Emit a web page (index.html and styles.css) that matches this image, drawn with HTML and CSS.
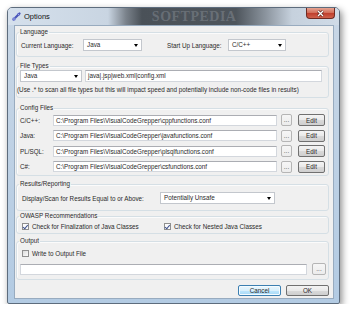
FILE: index.html
```html
<!DOCTYPE html>
<html lang="en">
    <head>
        <meta charset="utf-8">
        <title>Options</title>
        <link rel="stylesheet" href="styles.css">
    </head>
    <body>
        <div class="window">
            <div class="titlebar">
                <svg class="appicon" width="9" height="9" viewBox="0 0 9 9">
                    <path d="M1.5 7.5 L7.5 1.5" stroke="#4a56b8" stroke-width="2.2" stroke-linecap="round"/>
                    <circle cx="2" cy="7" r="1.8" fill="#7b86d6"/>
                    <path d="M5 1 L8 4" stroke="#9aa4e8" stroke-width="1"/>
                </svg>
                <span class="title">Options</span>
                <span class="watermark">SOFTPEDIA</span>
                <button type="button" class="close">
                    <svg width="9" height="7" viewBox="0 0 9 7">
                        <path d="M2 1 L7 6 M7 1 L2 6" stroke="#5a2018" stroke-width="2.6"/>
                        <path d="M2 1 L7 6 M7 1 L2 6" stroke="#fff" stroke-width="1.3"/>
                    </svg>
                </button>
            </div>

            <div class="client">
                <fieldset class="group g-lang">
                    <legend>Language</legend>
                    <div class="row">
                        <span class="lbl lbl-current">Current Language:</span>
                        <div class="combo w-cur">Java</div>
                        <span class="lbl lbl-startup">Start Up Language:</span>
                        <div class="combo w-start">C/C++</div>
                    </div>
                </fieldset>

                <fieldset class="group g-types">
                    <legend>File Types</legend>
                    <div class="row">
                        <div class="combo w-type">Java</div>
                        <div class="field w-ext">java|.jsp|web.xml|config.xml</div>
                    </div>
                    <p class="note">(Use .* to scan all file types but this will impact speed and potentially include non-code files in results)</p>
                </fieldset>

                <fieldset class="group g-config">
                    <legend>Config Files</legend>
                    <div class="row conf">
                        <span class="lbl lbl-conf">C/C++:</span>
                        <div class="field w-conf">C:\Program Files\VisualCodeGrepper\cppfunctions.conf</div>
                        <button type="button" class="btn dots">...</button>
                        <button type="button" class="btn edit">Edit</button>
                    </div>
                    <div class="row conf">
                        <span class="lbl lbl-conf">Java:</span>
                        <div class="field w-conf">C:\Program Files\VisualCodeGrepper\javafunctions.conf</div>
                        <button type="button" class="btn dots">...</button>
                        <button type="button" class="btn edit">Edit</button>
                    </div>
                    <div class="row conf">
                        <span class="lbl lbl-conf">PL/SQL:</span>
                        <div class="field w-conf">C:\Program Files\VisualCodeGrepper\plsqlfunctions.conf</div>
                        <button type="button" class="btn dots">...</button>
                        <button type="button" class="btn edit">Edit</button>
                    </div>
                    <div class="row conf">
                        <span class="lbl lbl-conf">C#:</span>
                        <div class="field w-conf">C:\Program Files\VisualCodeGrepper\csfunctions.conf</div>
                        <button type="button" class="btn dots">...</button>
                        <button type="button" class="btn edit">Edit</button>
                    </div>
                </fieldset>

                <fieldset class="group g-results">
                    <legend>Results/Reporting</legend>
                    <div class="row">
                        <span class="lbl lbl-display">Display/Scan for Results Equal to or Above:</span>
                        <div class="combo w-level">Potentially Unsafe</div>
                    </div>
                </fieldset>

                <fieldset class="group g-owasp">
                    <legend>OWASP Recommendations</legend>
                    <div class="row checks">
                        <label class="check w-final"><span class="box on"></span>Check for Finalization of Java Classes</label>
                        <label class="check"><span class="box on"></span>Check for Nested Java Classes</label>
                    </div>
                </fieldset>

                <fieldset class="group g-output">
                    <legend>Output</legend>
                    <div class="row checks">
                        <label class="check"><span class="box"></span>Write to Output File</label>
                    </div>
                    <div class="row outfile">
                        <div class="field w-out"></div>
                        <button type="button" class="btn dots w-outdots">...</button>
                    </div>
                </fieldset>

                <div class="buttons">
                    <button type="button" class="btn cmd default">Cancel</button>
                    <button type="button" class="btn cmd">OK</button>
                </div>
            </div>
        </div>
    </body>
</html>
```

FILE: styles.css
```css
* { box-sizing: border-box; }

body {
    margin: 0;
    background: #fff;
    font-family: "Liberation Sans", Arial, sans-serif;
    font-size: 6.3px;
    color: #2a2a2a;
}

/* window frame */
.window {
    width: 333px;
    height: 297px;
    margin: 7px 0 0 7px;
    display: flex;
    flex-direction: column;
    border: 1px solid #5d6c7d;
    border-radius: 5px 5px 2px 2px;
    background: linear-gradient(#c9d7e6, #b3cbe3);
    box-shadow: 2px 3px 7px rgba(0, 0, 0, 0.45);
}

.titlebar {
    display: flex;
    align-items: flex-start;
    height: 17px;
    border-radius: 4px 4px 0 0;
    overflow: hidden;
    background: linear-gradient(to right,
        #d5e0ec 0, #c9d5e2 100px, #7a828b 118px, #4a5158 134px,
        #4e555c 228px, #8c959f 258px, #c6d1dd 284px, #d0dbe7 100%);
}

.appicon {
    margin: 4px 0 0 4px;
    flex: none;
}

.title {
    margin: 4px 0 0 3px;
    font-size: 7.5px;
    line-height: 9px;
    color: #111;
}

.watermark {
    margin: 0 0 0 102px;
    font-family: "Liberation Serif", serif;
    font-weight: bold;
    font-size: 14px;
    line-height: 17px;
    letter-spacing: 0.5px;
    color: rgba(150, 156, 163, 0.4);
}

.close {
    margin: 0 4px 0 auto;
    width: 29px;
    height: 11px;
    padding: 0;
    display: flex;
    align-items: center;
    justify-content: center;
    border: 1px solid #6e2a22;
    border-top: 0;
    border-radius: 0 0 4px 4px;
    background: linear-gradient(#e6a593, #d4705c 45%, #c0402e 55%, #d0624c);
}

/* client area */
.client {
    height: 274px;
    margin: 0 5px 4px 6px;
    padding: 0 4px 0 1px;
    display: flex;
    flex-direction: column;
    background: #f0f0f0;
    border: 1px solid #98abbf;
}

.group {
    margin: 0;
    padding: 0 3px;
    min-width: 0;
    border: 1px solid #d5dfe5;
    border-radius: 3px;
    box-shadow: inset 1px 1px #fbfbfb;
}

.group legend {
    padding: 0 1px;
    margin-left: -1px;
    line-height: 8px;
}

.g-lang { margin-top: 2px; padding-top: 3px; padding-bottom: 5px; }
.g-types { margin-top: 5px; padding-bottom: 3px; }
.g-config { margin-top: 6px; padding-top: 2px; padding-bottom: 2.5px; }
.g-results { margin-top: 4px; padding-top: 4px; padding-bottom: 6px; }
.g-owasp { margin-top: 1px; padding-top: 1px; padding-bottom: 2px; }
.g-output { margin-top: 3px; padding-top: 3px; padding-bottom: 4px; }

.row {
    display: flex;
    align-items: center;
    height: 12px;
}

.row.conf + .row.conf { margin-top: 3.5px; }

.row.checks { height: 10px; }

.row.outfile { margin-top: 5px; }

.lbl { flex: none; white-space: nowrap; }
.lbl-current { width: 63px; padding-left: 1px; }
.lbl-startup { width: 61px; margin-left: 25px; }
.lbl-conf { width: 33px; }
.lbl-display { width: 140px; padding-left: 2px; }

/* inputs */
.combo, .field {
    flex: none;
    height: 12px;
    line-height: 10px;
    white-space: nowrap;
    overflow: hidden;
    background: #fff;
}

.combo {
    display: flex;
    align-items: center;
    justify-content: space-between;
    padding: 0 3px 0 3px;
    border: 1px solid #c3c7cd;
}

.combo::after {
    content: "";
    border-left: 2.5px solid transparent;
    border-right: 2.5px solid transparent;
    border-top: 3px solid #000;
}

.field {
    padding: 0 2px;
    border: 1px solid #d3d7dd;
    border-top-color: #abadb3;
}

.w-cur { width: 59px; }
.w-start { width: 58px; }
.w-type { width: 62px; }
.w-ext { width: 237px; margin-left: 3px; }
.w-conf { width: 224px; height: 11px; }
.w-level { width: 115px; }
.w-out { width: 287px; height: 11px; }

.note {
    margin: 4px 0 0 -3px;
    line-height: 8px;
    white-space: nowrap;
}

/* buttons */
.btn {
    flex: none;
    padding: 0;
    font: inherit;
    line-height: 9px;
    color: #2a2a2a;
    border: 1px solid #707070;
    border-radius: 2px;
    background: linear-gradient(#f4f4f4, #e9e9e9 50%, #d9d9d9 51%, #cfcfcf);
}

.btn.dots {
    width: 11px;
    height: 12px;
    margin-left: 4px;
    display: flex;
    align-items: center;
    justify-content: center;
    font-size: 6.5px;
    line-height: 8px;
    color: #555;
    border-color: #b5b5b5;
    background: linear-gradient(#f6f6f6, #ececec);
}

.btn.edit {
    width: 27px;
    height: 12px;
    margin-left: 6px;
}

.btn.w-outdots {
    width: 14px;
    margin-left: 5px;
}

.buttons {
    margin-top: 5px;
    display: flex;
    justify-content: flex-end;
    gap: 5px;
}

.btn.cmd {
    width: 43px;
    height: 11px;
}

.btn.default {
    border-color: #3c7fb1;
    background: linear-gradient(#eaf6fd, #d9f0fc 50%, #bee6fd 51%, #a7d9f5);
    box-shadow: inset 0 0 0 1px #f4fbff;
}

/* checkboxes */
.check {
    display: flex;
    align-items: center;
    padding-left: 2px;
    white-space: nowrap;
}

.w-final { width: 142px; }

.box {
    width: 7px;
    height: 7px;
    margin-right: 3px;
    border: 1px solid #8f8f8f;
    background: linear-gradient(135deg, #dcdcdc, #fbfbfb);
    position: relative;
}

.box.on {
    background: #fbfbfb;
}

.box.on::after {
    content: "";
    position: absolute;
    left: 1px;
    top: 0;
    width: 2px;
    height: 3.5px;
    border: solid #3b4f8c;
    border-width: 0 1px 1px 0;
    transform: rotate(40deg);
}
```
